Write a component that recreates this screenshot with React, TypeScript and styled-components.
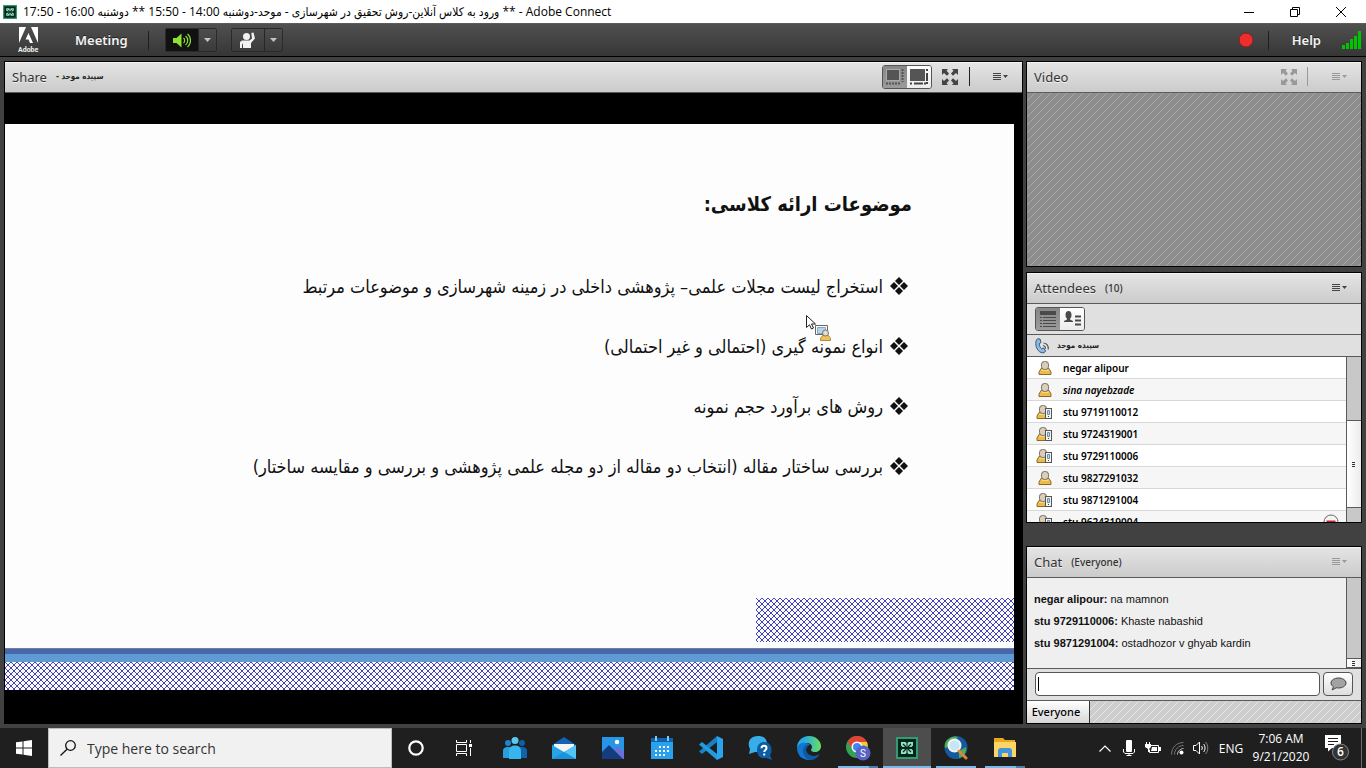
import React from 'react';
import styled, { createGlobalStyle, css } from 'styled-components';

const Global = createGlobalStyle`
  * { box-sizing: border-box; }
  body { margin: 0; background: #414141; font-family: "Noto Sans", "DejaVu Sans", sans-serif; }
  button { font: inherit; padding: 0; border: 0; background: none; color: inherit; }
  ul { list-style: none; margin: 0; padding: 0; }
  h1, h2, p { margin: 0; font-weight: inherit; }
  svg { display: block; flex: none; }
`;

const Page = styled.div`
  display: flex;
  flex-direction: column;
  min-height: 100vh;
`;

/* ---------- window title bar ---------- */
const TitleBar = styled.header`
  display: flex;
  align-items: center;
  height: 23px;
  padding: 0 2px 0 3px;
  background: #fff;
  color: #000;
`;
const WindowTitle = styled.h1`
  flex: 1;
  min-width: 0;
  margin-left: 6px;
  font: 12px/23px "Open Sans", "DejaVu Sans Condensed", sans-serif;
  white-space: nowrap;
  overflow: hidden;
`;
const WindowButton = styled.button`
  display: grid;
  place-items: center;
  width: 46px;
  height: 21px;
`;

/* ---------- meeting toolbar ---------- */
const Toolbar = styled.nav`
  display: flex;
  align-items: center;
  height: 34px;
  padding: 0 5px 0 18px;
  background: linear-gradient(#505050, #363636);
  border-top: 1px solid #5c5c5c;
  border-bottom: 1px solid #000;
  color: #f2f2f2;
`;
const MenuButton = styled.button`
  font-size: 13px;
  font-weight: 600;
  line-height: 24px;
  text-shadow: 0 -1px 0 #222;
`;
const Divider = styled.span<{ $tone?: string }>`
  width: 1px;
  height: 19px;
  background: ${(p) => p.$tone ?? '#1e1e1e'};
`;
const SplitButton = styled.div`
  display: flex;
  height: 24px;
  border: 1px solid #2a2a2a;
  border-radius: 2px;
  background: linear-gradient(#4e4e4e, #3a3a3a);
`;
const SplitMain = styled.button<{ $on?: boolean }>`
  display: grid;
  place-items: center;
  width: 33px;
  border-right: 1px solid #262626;
  background: ${(p) => (p.$on ? '#111' : 'transparent')};
`;
const SplitCaret = styled.button`
  display: grid;
  place-items: center;
  width: 17px;
`;
const Gap = styled.span<{ $w: number }>`
  flex: none;
  width: ${(p) => p.$w}px;
`;
const Spacer = styled.span`
  flex: 1;
`;

/* ---------- pods ---------- */
const Workspace = styled.main`
  flex: 1;
  display: flex;
  gap: 3px;
  padding: 4px;
  background: #414141;
`;
const SideColumn = styled.aside`
  display: flex;
  flex-direction: column;
  flex: none;
  width: 336px;
`;
const Pod = styled.section`
  display: flex;
  flex-direction: column;
  min-width: 0;
  border: 1px solid #000;
  background: #e0e0e0;
`;
const SharePod = styled(Pod)`
  flex: 1;
  background: #000;
`;
const VideoPod = styled(Pod)`
  height: 206px;
`;
const AttendeesPod = styled(Pod)`
  height: 251px;
  margin-top: 5px;
`;
const ChatPod = styled(Pod)`
  flex: 1;
  margin-top: 23px;
`;
const PodHeader = styled.div`
  display: flex;
  align-items: center;
  flex: none;
  height: 31px;
  padding: 0 13px 2px 7px;
  background: linear-gradient(#e4e4e4, #cbcbcb);
  border-top: 1px solid #f4f4f4;
  border-bottom: 1px solid #5a5a5a;
  color: #333;
`;
const PodTitle = styled.h2`
  font-size: 13px;
  line-height: 20px;
  text-shadow: 0 1px 0 #f0f0f0;
`;
const PodNote = styled.span`
  margin-left: 9px;
  font-size: 10px;
  font-weight: 500;
  line-height: 20px;
`;
const Presenter = styled.bdi`
  font: bold 8px/20px "DejaVu Sans Condensed", "DejaVu Sans", sans-serif;
  color: #222;
`;
const IconButton = styled.button<{ $faded?: boolean }>`
  display: grid;
  place-items: center;
  color: ${(p) => (p.$faded ? '#999' : '#444')};
`;
const Toggle = styled.div`
  display: flex;
  width: 50px;
  height: 24px;
  border: 1px solid #555;
  border-radius: 3px;
  overflow: hidden;
`;
const ToggleHalf = styled.button<{ $pressed?: boolean }>`
  flex: 1;
  display: grid;
  place-items: center;
  background: ${(p) => (p.$pressed ? 'linear-gradient(#878787, #9b9b9b)' : 'linear-gradient(#fff, #ececec)')};
`;

const stripes = (base: string, line: string) => css`
  background-color: ${base};
  background-image: linear-gradient(135deg, ${line} 6%, transparent 6%, transparent 44%, ${line} 44%, ${line} 56%, transparent 56%, transparent 94%, ${line} 94%);
  background-size: 8px 8px;
`;
const wideStripes = (base: string, line: string) => css`
  background-color: ${base};
  background-image: linear-gradient(135deg, transparent 44%, ${line} 44%, ${line} 56%, transparent 56%);
  background-size: 8px 8px;
`;
const VideoArea = styled.div`
  flex: 1;
  ${wideStripes('#8d8d8d', '#a9a9a9')}
`;

/* ---------- shared slide ---------- */
const Stage = styled.div`
  flex: 1;
  display: flex;
  padding: 31px 8px 33px 0;
  background: #000;
`;
const Slide = styled.article`
  position: relative;
  flex: 1;
  display: flex;
  flex-direction: column;
  min-width: 0;
  background: #fdfdfd;
  color: #111;
  font-family: "DejaVu Sans Condensed", "DejaVu Sans", sans-serif;
`;
const SlideTitle = styled.h2`
  margin: 60px 102px 32px 0;
  font-size: 20px;
  font-weight: bold;
  line-height: 40px;
`;
const Topics = styled.ul`
  flex: 1;
  margin-right: 106px;
`;
const Topic = styled.li`
  display: flex;
  align-items: center;
  gap: 7px;
  height: 60px;
  font-size: 18px;
  white-space: nowrap;
`;
const hatch = css`
  background-color: #fbfbff;
  background-image:
    linear-gradient(45deg, transparent 42%, #4343b4 42%, #4343b4 58%, transparent 58%),
    linear-gradient(135deg, transparent 42%, #4343b4 42%, #4343b4 58%, transparent 58%);
  background-size: 6px 6px;
`;
const HatchBox = styled.div`
  align-self: flex-start;
  width: 258px;
  height: 44px;
  margin-bottom: 6px;
  ${hatch}
`;
const BlueBand = styled.div`
  height: 14px;
  background: linear-gradient(#6f7f9e 1px, #4867ab 1px, #4867ab 6px, #5f9bd3 6px);
`;
const HatchStrip = styled.div`
  height: 28px;
  ${hatch}
`;
const PointerMark = styled.span`
  position: absolute;
  top: 190px;
  right: 183px;
`;

/* ---------- attendees ---------- */
const ViewBar = styled.div`
  display: flex;
  align-items: center;
  height: 31px;
  padding-left: 8px;
  border-bottom: 1px solid #5a5a5a;
`;
const HostRow = styled.div`
  display: flex;
  align-items: center;
  gap: 7px;
  height: 22px;
  padding-left: 8px;
  border-bottom: 1px solid #5a5a5a;
`;
const Scroller = styled.div`
  flex: 1;
  display: flex;
  min-height: 0;
  overflow: hidden;
`;
const People = styled.ul`
  flex: 1;
  overflow: hidden;
`;
const PersonRow = styled.li<{ $italic?: boolean }>`
  display: flex;
  align-items: center;
  height: 22px;
  padding: 0 7px 0 9px;
  border-bottom: 1px solid #d8d8d8;
  background: #fff;
  color: #000;
  font-size: 10px;
  font-weight: 600;
  font-style: ${(p) => (p.$italic ? 'italic' : 'normal')};
  &:nth-child(even) { background: #f6f6f6; }
`;
const PersonIcon = styled.span`
  width: 27px;
`;
const Track = styled.div<{ $top: number }>`
  flex: none;
  width: 15px;
  padding-top: ${(p) => p.$top}px;
  background: #c8c8c8;
  border-left: 1px solid #5a5a5a;
`;
const Thumb = styled.div<{ $h: number }>`
  display: grid;
  place-items: center;
  height: ${(p) => p.$h}px;
  background: linear-gradient(90deg, #fff, #ececec);
  border: solid #5a5a5a;
  border-width: 1px 0;
`;

/* ---------- chat ---------- */
const Messages = styled.div`
  flex: 1;
  padding: 10px 7px 0;
  background: #efefef;
  color: #111;
  font: 11px/22px "Liberation Sans", Arial, sans-serif;
`;
const Compose = styled.form`
  display: flex;
  align-items: center;
  gap: 3px;
  height: 33px;
  padding: 0 8px 2px;
  border-top: 1px solid #5a5a5a;
  border-bottom: 1px solid #5a5a5a;
`;
const ChatField = styled.div`
  flex: 1;
  display: flex;
  align-items: center;
  height: 24px;
  padding-left: 2px;
  border: 1px solid #555;
  border-radius: 4px;
  background: #fff;
`;
const Caret = styled.span`
  width: 1px;
  height: 14px;
  background: #000;
`;
const ChatInput = styled.input`
  flex: 1;
  min-width: 0;
  border: 0;
  outline: 0;
  background: none;
  font: 11px "Liberation Sans", sans-serif;
`;
const SendButton = styled.button`
  display: grid;
  place-items: center;
  width: 30px;
  height: 24px;
  border: 1px solid #555;
  border-radius: 4px;
  background: linear-gradient(#fff, #dedede);
`;
const Tabs = styled.div`
  display: flex;
  height: 22px;
  ${stripes('#cdcdcd', '#e6e6e6')}
`;
const Tab = styled.button`
  width: 63px;
  background: linear-gradient(#fff, #d6d6d6);
  border-right: 1px solid #333;
  color: #000;
  font-size: 11px;
  font-weight: 500;
  line-height: 20px;
  padding-right: 4px;
`;

/* ---------- taskbar ---------- */
const Taskbar = styled.footer`
  display: flex;
  flex: none;
  height: 40px;
  background: #1f1f1f;
  color: #fff;
  font-family: "Open Sans", sans-serif;
`;
const TaskButton = styled.button`
  display: grid;
  place-items: center;
  width: 48px;
  height: 40px;
`;
const SearchBox = styled.label`
  display: flex;
  align-items: center;
  gap: 10px;
  width: 344px;
  padding-left: 11px;
  border: 1px solid #bdbdbd;
  background: #f1f1f1;
`;
const SearchInput = styled.input`
  flex: 1;
  min-width: 0;
  border: 0;
  outline: 0;
  background: none;
  padding: 0 1px;
  font: 14px "Open Sans", sans-serif;
  &::placeholder { color: #333; opacity: 1; }
`;
const Apps = styled.div`
  display: flex;
  gap: 1px;
  margin-left: 3px;
`;
const AppButton = styled.button<{ $state?: 'open' | 'multi' | 'active' }>`
  display: grid;
  place-items: center;
  width: 48px;
  height: 40px;
  ${(p) => p.$state === 'active' && css`
    background: linear-gradient(#76b9ed, #76b9ed) 0 100% / 100% 2px no-repeat #4d4d4d;
  `}
  ${(p) => p.$state === 'open' && css`
    background: linear-gradient(#76b9ed, #76b9ed) 50% 100% / 40px 2px no-repeat;
  `}
  ${(p) => p.$state === 'multi' && css`
    background: linear-gradient(90deg, #76b9ed 31px, #4a7fa8 31px) 50% 100% / 40px 2px no-repeat;
  `}
`;
const Tray = styled.div`
  display: flex;
  align-items: center;
  margin-left: auto;
`;
const TrayButton = styled.button<{ $w: number }>`
  display: grid;
  place-items: center;
  width: ${(p) => p.$w}px;
  height: 40px;
  font-size: 12px;
`;
const Clock = styled.button`
  width: 64px;
  font-size: 12px;
  line-height: 18px;
  white-space: nowrap;
`;
const ShowDesktop = styled.button`
  width: 5px;
  height: 40px;
  border-left: 1px solid #6a6a6a;
`;

/* ---------- drawings ---------- */
const ConnectLogo = ({ size }: { size: number }) => (
  <svg width={size} height={size} viewBox="0 0 22 22">
    <rect x="1" y="1" width="20" height="20" fill="#06251c" stroke="#2f9c74" strokeWidth="2" />
    <g fill="#8fe3c0">
      <path d="M5 5h4.500l1 1v4h-4L5 8.500zM17 5h-4.500l-1 1v4h4L17 8.500zM5 17h4.500l1-1v-4h-4L5 13.500zM17 17h-4.500l-1-1v-4h4l1.500 1.500z" />
    </g>
    <path d="m7 7 3 3M15 7l-3 3M7 15l3-3M15 15l-3-3" stroke="#06251c" strokeWidth="1.200" />
  </svg>
);
const AdobeLogo = () => (
  <svg width="22" height="26" viewBox="0 0 22 26">
    <path d="M1 0h7L1 16zM20 0h-7l7 16zM10.500 6l4.500 10h-3l-1.500-3.500H7.500z" fill="#fff" />
    <text x="0" y="25" fontSize="7" fontWeight="bold" fontFamily="Roboto, sans-serif" fill="#f2f2f2">Adobe</text>
  </svg>
);
const DownCaret = () => (
  <svg width="7" height="4"><path d="M0 0h7L3.500 4z" fill="#c4c4c4" /></svg>
);
const MenuGlyph = () => (
  <svg width="16" height="9" fill="currentColor">
    <path d="M0 1h8v1H0zM0 3h8v1H0zM0 5h8v1H0zM0 7h8v1H0zM10 3h5l-2.500 3z" />
  </svg>
);
const Expand = () => (
  <svg width="16" height="16" fill="currentColor">
    <path d="M0 0h6L4.500 1.800 7 4.500 5 6.800 2 4 0 6zM16 0h-6l1.500 1.800L9 4.500 11 6.800 14 4l2 2zM0 16h6l-1.500-1.800L7 11.500 5 9.200 2 12 0 10zM16 16h-6l1.500-1.800L9 11.500 11 9.200 14 12l2-2z" />
  </svg>
);
const Grip = () => (
  <svg width="4" height="5"><path d="M0 .5h3M0 2.500h3M0 4.500h3" stroke="#333" /></svg>
);
const Person = ({ device }: { device?: boolean }) => (
  <svg width="18" height="16" viewBox="0 0 18 16">
    <g transform={device ? undefined : 'translate(2 0)'}>
      <path d="M1 14.500v-2.500L3 8.500h8l2 3.500v2.500z" fill="#eebb45" stroke="#8a6a28" />
      <path d="M3.500 9.500h7v1h-7z" fill="#fff2cc" />
      <rect x="3.500" y="1.500" width="7" height="8" rx="3" fill="#dccdb4" stroke="#6b6b6b" />
    </g>
    {device && (
      <g>
        <rect x="9.500" y="4.500" width="6" height="10" fill="#f4f4f4" stroke="#555" />
        <path d="M11.500 6.500h2v4h-2z" fill="#b9dcf0" stroke="#6c8fa5" />
        <path d="M12 12.500h1" stroke="#444" />
      </g>
    )}
  </svg>
);
const Phone = () => (
  <svg width="15" height="16" viewBox="0 0 15 16">
    <path d="M2.500.8 5 1l1 3.500-1.800 1.200c0 2 .9 3.800 2.400 5l2-.7 2 3-1.600 1.800C5 15.500.8 11.500.8 5.500c0-2 .5-3.800 1.700-4.700z" fill="#8ebbe0" stroke="#34567a" />
    <path d="M8 7.500c1.500.3 2.500 1.500 2.500 3.200M8.500 5c2.800.3 5 2.700 4.800 6.500" fill="none" stroke="#555" strokeWidth="1.200" />
  </svg>
);
const Diamonds = () => (
  <svg width="18" height="18" viewBox="0 0 18 18">
    <path d="m9 0 4 4-4 4-4-4zM9 10l4 4-4 4-4-4zM4 5l4 4-4 4-4-4zM14 5l4 4-4 4-4-4z" fill="#111" />
  </svg>
);

const people = [
  { name: 'negar alipour' },
  { name: 'sina nayebzade', italic: true },
  { name: 'stu 9719110012', device: true },
  { name: 'stu 9724319001', device: true },
  { name: 'stu 9729110006', device: true },
  { name: 'stu 9827291032' },
  { name: 'stu 9871291004', device: true },
  { name: 'stu 9624319004', device: true, blocked: true },
];

const topics = [
  'استخراج لیست مجلات علمی– پژوهشی داخلی در زمینه شهرسازی و موضوعات مرتبط',
  'انواع نمونه گیری (احتمالی و غیر احتمالی)',
  'روش های برآورد حجم نمونه',
  'بررسی ساختار مقاله (انتخاب دو مقاله از دو مجله علمی پژوهشی و بررسی و مقایسه ساختار)',
];

const messages = [
  ['negar alipour', 'na mamnon'],
  ['stu 9729110006', 'Khaste nabashid'],
  ['stu 9871291004', 'ostadhozor v ghyab kardin'],
];

export default function App() {
  return (
    <Page>
      <Global />
      <TitleBar>
        <ConnectLogo size={14} />
        <WindowTitle>
          <bdi dir="rtl">
            ** ورود به کلاس آنلاین-روش تحقیق در شهرسازی - موحد-دوشنبه 14:00 - 15:50 ** دوشنبه 16:00 - 17:50
          </bdi>
          {' - Adobe Connect'}
        </WindowTitle>
        <WindowButton aria-label="Minimize">
          <svg width="10" height="10"><path d="M0 5.500h10" stroke="#000" /></svg>
        </WindowButton>
        <WindowButton aria-label="Restore">
          <svg width="10" height="10" fill="none" stroke="#000"><path d="M.5 2.500h7v7h-7zM2.500 2.500v-2h7v7h-2" /></svg>
        </WindowButton>
        <WindowButton aria-label="Close">
          <svg width="10" height="10"><path d="m0 0 10 10M10 0 0 10" stroke="#000" /></svg>
        </WindowButton>
      </TitleBar>

      <Toolbar>
        <AdobeLogo />
        <Gap $w={35} />
        <MenuButton>Meeting</MenuButton>
        <Gap $w={20} />
        <Divider />
        <Gap $w={16} />
        <SplitButton>
          <SplitMain $on aria-label="Speaker">
            <svg width="18" height="15" viewBox="0 0 18 15">
              <path d="M0 5h3.500L8.500.5v14L3.500 10H0z" fill="#8be234" />
              <path d="M10.500 5c1.500 1 1.500 4 0 5M12.500 3c3 2 3 7 0 9M14.500 1c4 3 4 10 0 13" fill="none" stroke="#8be234" strokeWidth="1.200" />
            </svg>
          </SplitMain>
          <SplitCaret aria-label="Speaker options"><DownCaret /></SplitCaret>
        </SplitButton>
        <Gap $w={14} />
        <SplitButton>
          <SplitMain aria-label="Raise hand">
            <svg width="15" height="16" viewBox="0 0 15 16" fill="#f2f2f2">
              <circle cx="6.500" cy="4.500" r="3.500" />
              <path d="M0 10 2 8.500h7.500L12 6.500l-.7-5.500L13.500.5 15 6.500 11 11v5H3v-5l-1 2v3H0z" />
            </svg>
          </SplitMain>
          <SplitCaret aria-label="Status options"><DownCaret /></SplitCaret>
        </SplitButton>
        <Spacer />
        <svg width="16" height="16"><circle cx="8" cy="8" r="7" fill="#ee2e2e" stroke="#7d2222" /></svg>
        <Gap $w={14} />
        <Divider />
        <Gap $w={23} />
        <MenuButton>Help</MenuButton>
        <Gap $w={21} />
        <svg width="19" height="18" fill="#00c400">
          <path d="M0 14h3v4H0zM4 12h3v6H4zM8 8h3v10H8zM12 5h3v13h-3zM16 0h3v18h-3z" />
        </svg>
      </Toolbar>

      <Workspace>
        <SharePod>
          <PodHeader>
            <PodTitle>Share</PodTitle>
            <Gap $w={9} />
            <Presenter dir="rtl">سپیده موحد  -</Presenter>
            <Spacer />
            <Toggle>
              <ToggleHalf $pressed aria-label="Fit view">
                <svg width="18" height="16" fill="#555">
                  <path d="M0 0h14v12H0z" fill="#aaa" /><path d="M1 1h12v10H1z" />
                  <path d="M16.500 0v13M0 14.500h15" stroke="#555" strokeWidth="2" strokeDasharray="2 1" />
                </svg>
              </ToggleHalf>
              <ToggleHalf aria-label="Scroll view">
                <svg width="18" height="16" fill="#555">
                  <path d="M0 0h15v12H0z" />
                  <path d="M17 0v2M17 4v8M17 13v2M0 14.500h2M4 14.500h9M14 14.500h2" stroke="#444" strokeWidth="2" />
                </svg>
              </ToggleHalf>
            </Toggle>
            <Gap $w={10} />
            <IconButton aria-label="Full screen"><Expand /></IconButton>
            <Gap $w={11} />
            <Divider />
            <Gap $w={23} />
            <IconButton aria-label="Share pod options"><MenuGlyph /></IconButton>
          </PodHeader>
          <Stage>
            <Slide dir="rtl" lang="fa">
              <SlideTitle>موضوعات ارائه کلاسی:</SlideTitle>
              <Topics>
                {topics.map((t) => (
                  <Topic key={t}><Diamonds /><span>{t}</span></Topic>
                ))}
              </Topics>
              <HatchBox />
              <BlueBand />
              <HatchStrip />
              <PointerMark>
                <svg width="26" height="28" viewBox="0 0 26 28">
                  <path d="M1.500 1.500v12l3-2.700 2 4.200 2-1-2-4h4z" fill="#fff" stroke="#222" />
                  <path d="M10.500 11.500h12v9h-12z" fill="#fff" stroke="#666" />
                  <path d="M12.500 13.500h8v6h-8z" fill="#b4d3ea" stroke="#8aa6bb" />
                  <path d="M15.500 26.500v-2l2-3h6l2 3v2z" fill="#f0c060" stroke="#b08a40" />
                  <circle cx="20.500" cy="19" r="3" fill="#e6dccb" stroke="#777" />
                </svg>
              </PointerMark>
            </Slide>
          </Stage>
        </SharePod>

        <SideColumn>
          <VideoPod>
            <PodHeader>
              <PodTitle>Video</PodTitle>
              <Spacer />
              <IconButton $faded aria-label="Full screen video"><Expand /></IconButton>
              <Gap $w={10} />
              <Divider $tone="#999" />
              <Gap $w={24} />
              <IconButton $faded aria-label="Video pod options"><MenuGlyph /></IconButton>
            </PodHeader>
            <VideoArea />
          </VideoPod>

          <AttendeesPod>
            <PodHeader>
              <PodTitle>Attendees</PodTitle>
              <PodNote>(10)</PodNote>
              <Spacer />
              <IconButton aria-label="Attendees pod options"><MenuGlyph /></IconButton>
            </PodHeader>
            <ViewBar>
              <Toggle>
                <ToggleHalf $pressed aria-label="Attendee list view">
                  <svg width="16" height="16" stroke="#4a4a4a">
                    <path d="M0 2h16" strokeWidth="4" />
                    <path d="M0 6.500h2M3 6.500h13M0 9.500h2M3 9.500h13M0 12.500h2M3 12.500h13M0 15.500h2M3 15.500h13" strokeWidth="1" />
                  </svg>
                </ToggleHalf>
                <ToggleHalf aria-label="Attendee status view">
                  <svg width="17" height="16" fill="#4a4a4a">
                    <ellipse cx="4.500" cy="4" rx="3" ry="4" />
                    <path d="M3 6h3v2.500l3 1.500v1H0v-1l3-1.500z" />
                    <path d="M11 4.500h6v2h-6zM11 8.500h6v2h-6zM11 12.500h6v2h-6z" />
                  </svg>
                </ToggleHalf>
              </Toggle>
            </ViewBar>
            <HostRow>
              <Phone />
              <Presenter dir="rtl">سپیده موحد</Presenter>
            </HostRow>
            <Scroller>
              <People>
                {people.map((p) => (
                  <PersonRow key={p.name} $italic={p.italic}>
                    <PersonIcon><Person device={p.device} /></PersonIcon>
                    {p.name}
                    {p.blocked && (
                      <>
                        <Spacer />
                        <svg width="16" height="16">
                          <circle cx="8" cy="8" r="7" fill="#f4f4f4" stroke="#666" />
                          <path d="M3.500 6.500h9v3h-9z" fill="#c22f2f" />
                        </svg>
                      </>
                    )}
                  </PersonRow>
                ))}
              </People>
              <Track $top={63}><Thumb $h={88}><Grip /></Thumb></Track>
            </Scroller>
          </AttendeesPod>

          <ChatPod>
            <PodHeader>
              <PodTitle>Chat</PodTitle>
              <PodNote>(Everyone)</PodNote>
              <Spacer />
              <IconButton $faded aria-label="Chat pod options"><MenuGlyph /></IconButton>
            </PodHeader>
            <Scroller>
              <Messages>
                {messages.map(([who, text]) => (
                  <p key={who}><b>{who}:</b> {text}</p>
                ))}
              </Messages>
              <Track $top={80}><Thumb $h={10}><Grip /></Thumb></Track>
            </Scroller>
            <Compose>
              <ChatField>
                <Caret />
                <ChatInput aria-label="Chat message" />
              </ChatField>
              <SendButton type="button" aria-label="Send message">
                <svg width="17" height="14" viewBox="0 0 17 14">
                  <path d="M8.500 1C12.600 1 16 3.200 16 6s-3.400 5-7.500 5c-.8 0-1.500-.1-2.200-.2L2 13l1.500-3.200C2 8.900 1 7.500 1 6c0-2.800 3.400-5 7.500-5z" fill="#a2a2a2" stroke="#444" />
                </svg>
              </SendButton>
            </Compose>
            <Tabs><Tab>Everyone</Tab></Tabs>
          </ChatPod>
        </SideColumn>
      </Workspace>

      <Taskbar>
        <TaskButton aria-label="Start">
          <svg width="16" height="16" fill="#fff">
            <path d="M0 2.300 6.500 1.400v6.100H0zM7.500 1.200 16 0v7.500H7.500zM0 8.500h6.500v6.100L0 13.700zM7.500 8.500H16V16l-8.500-1.200z" />
          </svg>
        </TaskButton>
        <SearchBox>
          <svg width="16" height="16" fill="none" stroke="#111" strokeWidth="1.300">
            <circle cx="10.500" cy="5.500" r="4.800" /><path d="M7 9.200.5 15.500" />
          </svg>
          <SearchInput aria-label="Search" placeholder="Type here to search" />
        </SearchBox>
        <TaskButton aria-label="Cortana">
          <svg width="16" height="16"><circle cx="8" cy="8" r="6.700" fill="none" stroke="#fff" strokeWidth="2.200" /></svg>
        </TaskButton>
        <TaskButton aria-label="Task view">
          <svg width="16" height="16" fill="none" stroke="#fff">
            <path d="M.5 0v2.500h10V0M.5 4.500h10v7H.5zM.5 16v-2.500h10V16M14.500 0v3M14.500 8v8" /><path d="M13 4h3v3h-3z" fill="#fff" stroke="none" />
          </svg>
        </TaskButton>
        <Apps>
          <AppButton aria-label="People">
            <svg width="24" height="24" viewBox="0 0 24 24">
              <circle cx="5" cy="7" r="3" fill="#1c86d1" /><circle cx="19" cy="7" r="3" fill="#0f5fa8" />
              <path d="M0 22v-7c0-3 2-4 5-4s5 1 5 4v7z" fill="#2a9de0" /><path d="M14 22v-7c0-3 2-4 5-4s5 1 5 4v7z" fill="#0f62ad" />
              <circle cx="12" cy="4.500" r="3.500" fill="#5cc8f2" /><path d="M6 23v-8c0-4 2.500-5.500 6-5.500s6 1.500 6 5.500v8z" fill="#36b5ee" />
            </svg>
          </AppButton>
          <AppButton aria-label="Mail">
            <svg width="24" height="24" viewBox="0 0 24 24">
              <path d="M0 9 12 1l12 8v2H0z" fill="#1362b5" /><path d="M2 8h20v8H2z" fill="#f4f4f4" />
              <path d="M0 9v14h24V9L12 16z" fill="#27a4e9" /><path d="m12 16 12-7v14z" fill="#52c5f6" /><path d="M0 23 12 16l12 7z" fill="#1b93dc" />
            </svg>
          </AppButton>
          <AppButton aria-label="Photos">
            <svg width="22" height="24" viewBox="0 0 22 24">
              <path d="M0 1h22v22H0z" fill="#2796e8" /><path d="m12 14 4-4 6 6v7H12z" fill="#6a70d4" />
              <path d="M0 16 7 9l14 14H0z" fill="#163c80" /><circle cx="15" cy="6" r="2.200" fill="#fff" />
            </svg>
          </AppButton>
          <AppButton aria-label="Calendar">
            <svg width="22" height="24" viewBox="0 0 22 24">
              <path d="M0 2h22v5H0z" fill="#1360ad" /><path d="M0 6h22v17H0z" fill="#2aa1ec" /><path d="M4 0h2v5H4zM16 0h2v5h-2z" fill="#6fd1fb" />
              <path d="M8 10h2v2H8zM12 10h2v2h-2zM16 10h2v2h-2zM4 14h2v2H4zM8 14h2v2H8zM12 14h2v2h-2zM16 14h2v2h-2zM4 18h2v2H4zM8 18h2v2H8zM12 18h2v2h-2z" fill="#fff" />
            </svg>
          </AppButton>
          <AppButton aria-label="Visual Studio Code">
            <svg width="24" height="24" viewBox="0 0 24 24">
              <path d="m18 0 6 3v18l-6 3z" fill="#2ba4ef" /><path d="M18 0v6L3 18l-3-2.500z" fill="#1780c6" /><path d="M0 8.500 3 6l15 12v6z" fill="#239bdf" />
            </svg>
          </AppButton>
          <AppButton aria-label="Get Help">
            <svg width="24" height="24" viewBox="0 0 24 24">
              <path d="M10 0c6 0 9 3 9 8s-4 8-9 8l-3 0-6 2 1-5C-1 8 1 0 10 0z" fill="#38aee8" />
              <path d="M16 6c5 0 7.500 3.500 7.500 8 0 2-.5 4-1.500 5l2 5-6-2c-6 1-9-3-9-8s3-8 7-8z" fill="#0d5da5" />
              <path d="M13.500 12.200c0-3.500 5-3.200 5-.3 0 2-2.300 2-2.300 4.200M16.200 17.500v2" fill="none" stroke="#fff" strokeWidth="2" />
            </svg>
          </AppButton>
          <AppButton aria-label="Edge">
            <svg width="24" height="24" viewBox="0 0 24 24">
              <defs><linearGradient id="edge"><stop offset="0.300" stopColor="#27a9e6" /><stop offset="1" stopColor="#6ae05a" /></linearGradient></defs>
              <path d="M0 12C0 5 5 0 12 0s12 5 12 10c0 4-3 6-6 6-2 0-4-.5-4-2 0-1 1-1.500 1-3 0-2-2-4-5-4C5 7 2 9 0 12z" fill="url(#edge)" />
              <path d="M0 12c1-4 5-6 9-5 3 .5 4 2 4 2-2 0-4 2-4 5 0 4 4 6 8 6 3 0 5-1.500 5.500-1.500C20 22 16 24 12 24 5 24 0 19 0 12z" fill="#1477cf" />
              <path d="M9 14c-1-3 2-5 4-5-4-1-7 1-7 6 0 4 3 8 7 9 5 0 8-3 9.500-5.500C17 22 10 20 9 14z" fill="#0c59a4" />
            </svg>
          </AppButton>
          <AppButton $state="multi" aria-label="Chrome">
            <svg width="26" height="26" viewBox="0 0 26 26">
              <circle cx="12" cy="12" r="11" fill="#32a350" /><path d="M2.500 6.500C7-1 18-1 22 7H12l-4 8z" fill="#e24336" /><path d="M12 7h10c2 6 0 15-10 16l5-9z" fill="#f9cb2e" />
              <circle cx="12" cy="12" r="5.500" fill="#fff" /><circle cx="12" cy="12" r="4" fill="#4285f4" />
              <circle cx="18" cy="18" r="7.500" fill="#5763c5" /><text x="18" y="21.500" textAnchor="middle" fontSize="10" fontFamily="Roboto" fill="#fff">S</text>
            </svg>
          </AppButton>
          <AppButton $state="active" aria-label="Adobe Connect"><ConnectLogo size={22} /></AppButton>
          <AppButton $state="open" aria-label="Globe search">
            <svg width="26" height="24" viewBox="0 0 26 24">
              <circle cx="13" cy="11.500" r="11.500" fill="#145a9e" /><path d="M4 4c4-4 9-4 11-3l-4 5-5 5-4 1c-1-3 0-6 2-8zM16 15l7-4c1 5-2 10-7 11z" fill="#4cae50" />
              <circle cx="11.500" cy="9.500" r="6" fill="#c5e6f7" stroke="#f3f3f3" strokeWidth="2" /><path d="m16 15 7 7" stroke="#d8853f" strokeWidth="3" strokeLinecap="round" />
            </svg>
          </AppButton>
          <AppButton $state="multi" aria-label="File Explorer">
            <svg width="22" height="20" viewBox="0 0 22 20">
              <path d="M0 0h9l2 2h10v4H0z" fill="#e9a820" /><path d="M0 4h22v15H0z" fill="#fbd667" />
              <path d="M4 19v-6c0-2 1-3 3-3h8c2 0 3 1 3 3v6h-4v-4H8v4z" fill="#4295dc" />
            </svg>
          </AppButton>
        </Apps>
        <Tray>
          <TrayButton $w={24} aria-label="Show hidden icons">
            <svg width="12" height="7"><path d="m.5 6.500 5.500-5.500 5.500 5.500" fill="none" stroke="#fff" strokeWidth="1.200" /></svg>
          </TrayButton>
          <TrayButton $w={24} aria-label="Microphone">
            <svg width="12" height="16"><rect x="3" width="6" height="12" rx="1" fill="#fff" /><path d="M.5 9v3l1.500 1.500h8l1.500-1.500V9M6 13v3M3.500 15.500h5" fill="none" stroke="#fff" /></svg>
          </TrayButton>
          <TrayButton $w={24} aria-label="Battery">
            <svg width="16" height="12"><path d="M5.500 3.500h8v7h-9v-3" fill="none" stroke="#fff" /><path d="M7 5h5v4H6zM14 5h2v4h-2zM1 0h1v2h2V0h1v2h1v3L4 7v3H3V7L0 5V2h1z" fill="#fff" /></svg>
          </TrayButton>
          <TrayButton $w={24} aria-label="Network">
            <svg width="13" height="13" fill="none">
              <path d="M.5 12.500c0-7 5-12 12-12M3.500 12.500c0-5 4-9 9-9" stroke="#777" /><path d="M6.500 12.500c0-3 3-6 6-6" stroke="#ccc" /><circle cx="10.500" cy="10.500" r="2" fill="#fff" />
            </svg>
          </TrayButton>
          <TrayButton $w={24} aria-label="Volume">
            <svg width="16" height="14" fill="none" stroke="#fff">
              <path d="M.5 4.500h2.500l3.500-3.500v12L3 9.500H.5zM8.500 5c1 1 1 3 0 4M10.500 3c2 2 2 6 0 8" /><path d="M12.500 1c3 3 3 9 0 12" stroke="#888" />
            </svg>
          </TrayButton>
          <TrayButton $w={36}>ENG</TrayButton>
          <Clock>7:06 AM<br />9/21/2020</Clock>
          <TrayButton $w={48} aria-label="Notifications">
            <svg width="26" height="26" viewBox="0 0 26 26">
              <path d="M1 0h16v13H8l-4 3.500V13H1z" fill="#fff" /><path d="M4 3.500h10M4 6.500h10M4 9.500h6" stroke="#1f1f1f" />
              <circle cx="16.500" cy="17" r="8" fill="#333" stroke="#888" />
              <text x="16.500" y="21" textAnchor="middle" fontSize="12" fontFamily="Open Sans" fontWeight="600" fill="#fff">6</text>
            </svg>
          </TrayButton>
          <ShowDesktop aria-label="Show desktop" />
        </Tray>
      </Taskbar>
    </Page>
  );
}
